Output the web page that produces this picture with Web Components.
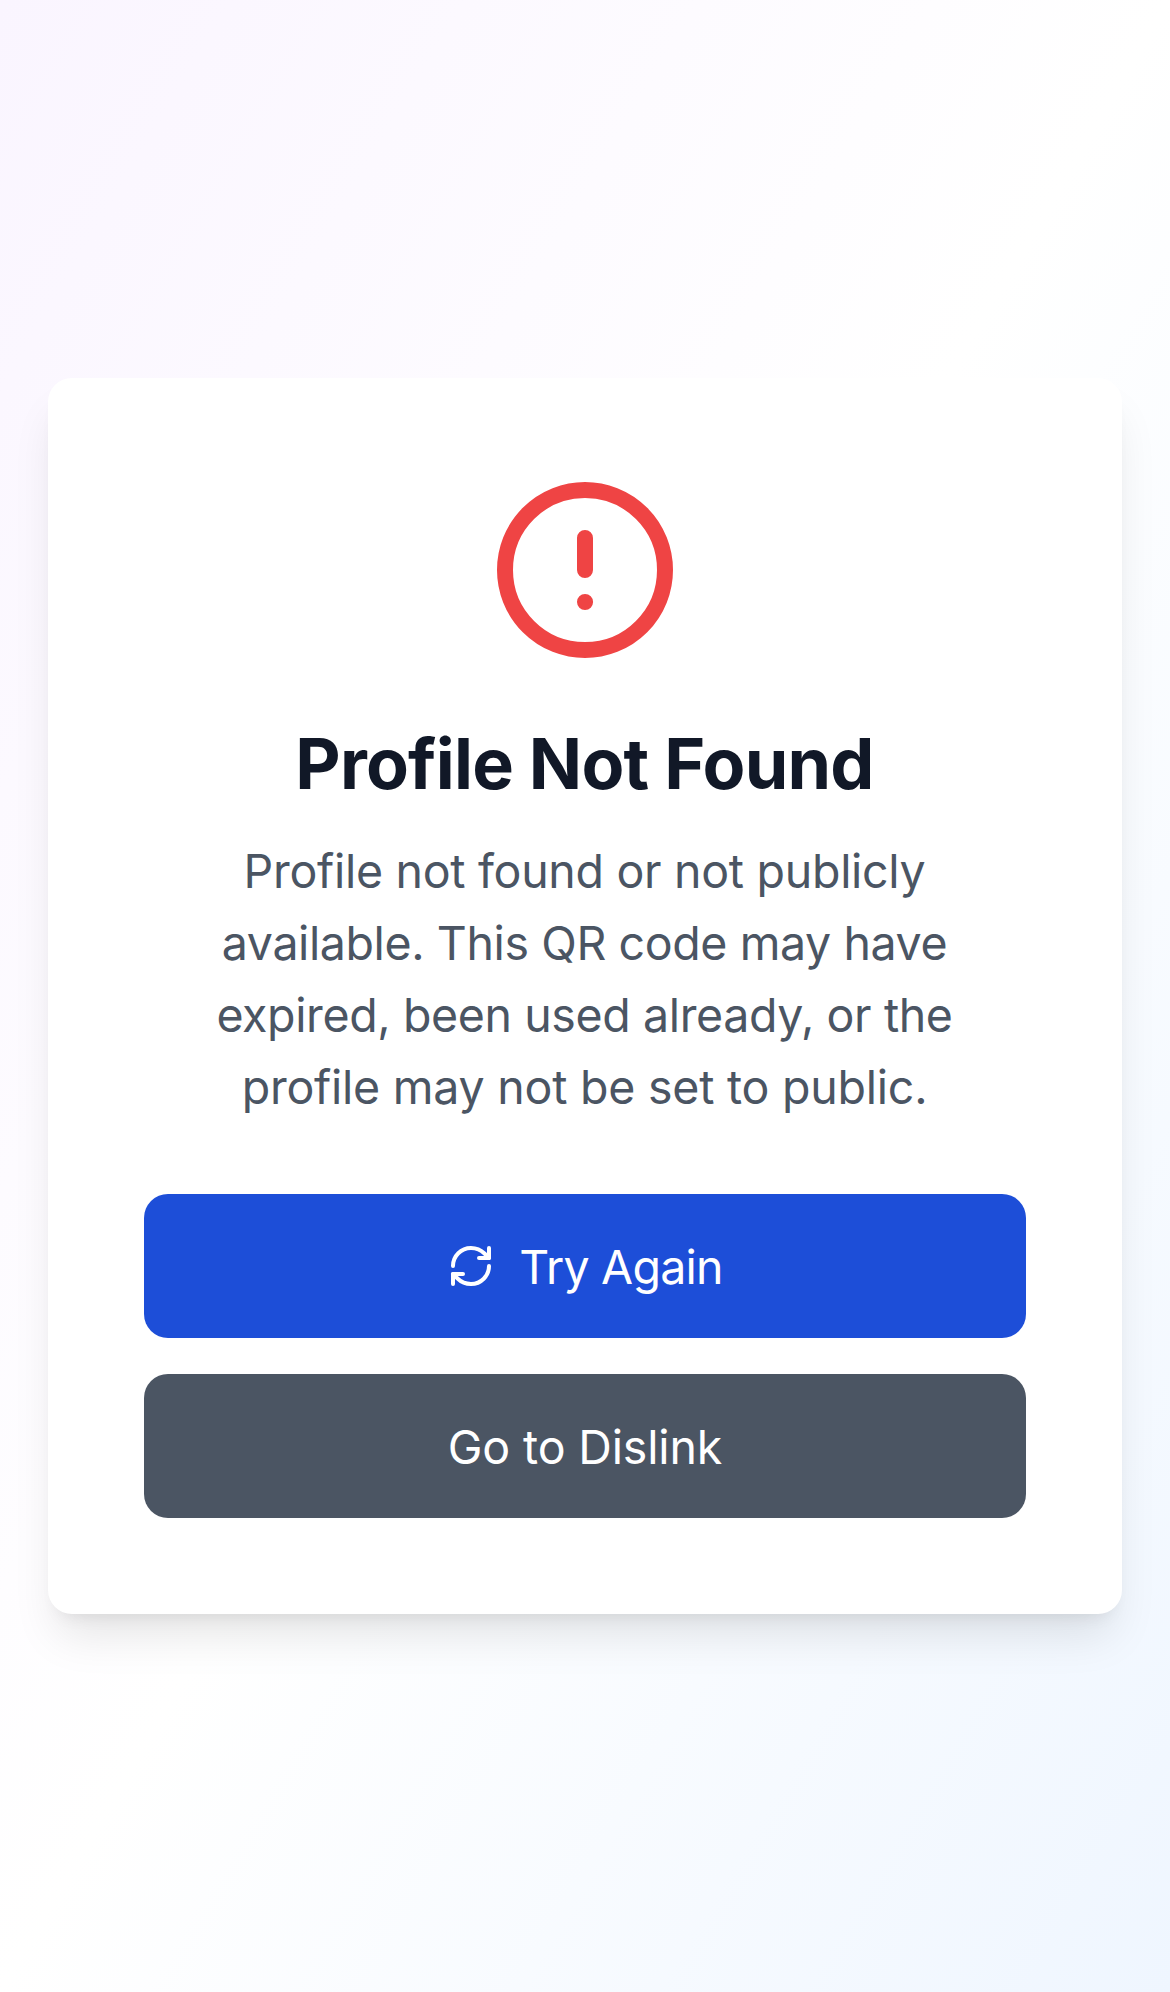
<!DOCTYPE html>
<html lang="en">
<head>
<meta charset="utf-8">
<title>Profile Not Found</title>
<style>
  body { margin: 0; font-family: Inter, "Liberation Sans", sans-serif; }
</style>
</head>
<body>
<profile-page>
  <error-card>
    <alert-icon slot="icon"></alert-icon>
    <card-title slot="title">Profile Not Found</card-title>
    <card-message slot="message">
      <text-line style="--track:-.29px">Profile not found or not publicly</text-line>
      <text-line style="--track:-.4px">available. This QR code may have</text-line>
      <text-line style="--track:-.385px">expired, been used already, or the</text-line>
      <text-line style="--track:-.23px">profile may not be set to public.</text-line>
    </card-message>
    <action-button style="--fill:#1d4ed8;--track:-.76px"><refresh-icon slot="icon"></refresh-icon>Try Again</action-button>
    <action-button style="--fill:#4b5563;--track:-.144px">Go to Dislink</action-button>
  </error-card>
</profile-page>
<script>
  const define = (name, html) => customElements.define(name, class extends HTMLElement {
    constructor() {
      super();
      this.attachShadow({ mode: 'open' }).innerHTML = html;
    }
  });

  define('profile-page', `
    <style>
      :host { display: flex; align-items: center; justify-content: center; box-sizing: border-box;
        min-height: 100vh; padding: 48px;
        background: linear-gradient(to bottom right, #faf5ff, #fff, #eff6ff); }
    </style>
    <slot></slot>`);

  define('error-card', `
    <style>
      :host { display: flex; flex-direction: column; box-sizing: border-box; width: 100%;
        padding: 96px; background: #fff; border-radius: 24px; text-align: center;
        box-shadow: 0 30px 45px -9px rgba(0,0,0,.1), 0 12px 18px -12px rgba(0,0,0,.1); }
      header { display: flex; flex-direction: column; align-items: center; }
      .title { margin: 48px 0 24px; }
      .actions { display: flex; flex-direction: column; gap: 36px; margin-top: 72px; }
    </style>
    <header>
      <slot name="icon"></slot>
      <div class="title"><slot name="title"></slot></div>
      <slot name="message"></slot>
    </header>
    <div class="actions"><slot></slot></div>`);

  define('alert-icon', `
    <style>:host, svg { display: block; width: 192px; height: 192px; }</style>
    <svg viewBox="0 0 24 24" fill="none" stroke="#ef4444" stroke-width="2" stroke-linecap="round" stroke-linejoin="round">
      <circle cx="12" cy="12" r="10"/><path d="M12 8v4M12 16h.01"/>
    </svg>`);

  define('card-title', `
    <style>
      :host { display: block; box-sizing: border-box; height: 96px; padding: 2px 1px 0 0; }
      h1 { margin: 0; font-size: 70px; line-height: 96px; font-weight: 700; letter-spacing: -.78px; color: #111827; }
    </style>
    <h1><slot></slot></h1>`);

  define('card-message', `
    <style>
      :host { display: block; box-sizing: border-box; height: 288px; padding: 1px 1px 0 0; color: #4b5563; }
      div { display: flex; flex-direction: column; align-items: center; }
    </style>
    <div><slot></slot></div>`);

  define('text-line', `
    <style>:host { display: block; white-space: nowrap; font-size: 46.5px; line-height: 72px; letter-spacing: var(--track); }</style>
    <slot></slot>`);

  define('action-button', `
    <style>
      :host { display: block; }
      button { display: flex; align-items: center; justify-content: center; gap: 24px; width: 100%; height: 144px;
        padding: 0; border: 0; border-radius: 24px; background: var(--fill); color: #fff;
        font: 400 46.5px/72px Inter, "Liberation Sans", sans-serif; letter-spacing: var(--track); }
      span { padding-top: 2px; }
    </style>
    <button type="button"><slot name="icon"></slot><span><slot></slot></span></button>`);

  define('refresh-icon', `
    <style>:host, svg { display: block; width: 48px; height: 48px; }</style>
    <svg viewBox="0 0 24 24" fill="none" stroke="currentColor" stroke-width="2" stroke-linecap="round" stroke-linejoin="round">
      <path d="M3 12a9 9 0 0 1 9-9 9.75 9.75 0 0 1 6.74 2.74L21 8"/><path d="M21 3v5h-5"/>
      <path d="M21 12a9 9 0 0 1-9 9 9.75 9.75 0 0 1-6.74-2.74L3 16"/><path d="M8 16H3v5"/>
    </svg>`);
</script>
</body>
</html>
